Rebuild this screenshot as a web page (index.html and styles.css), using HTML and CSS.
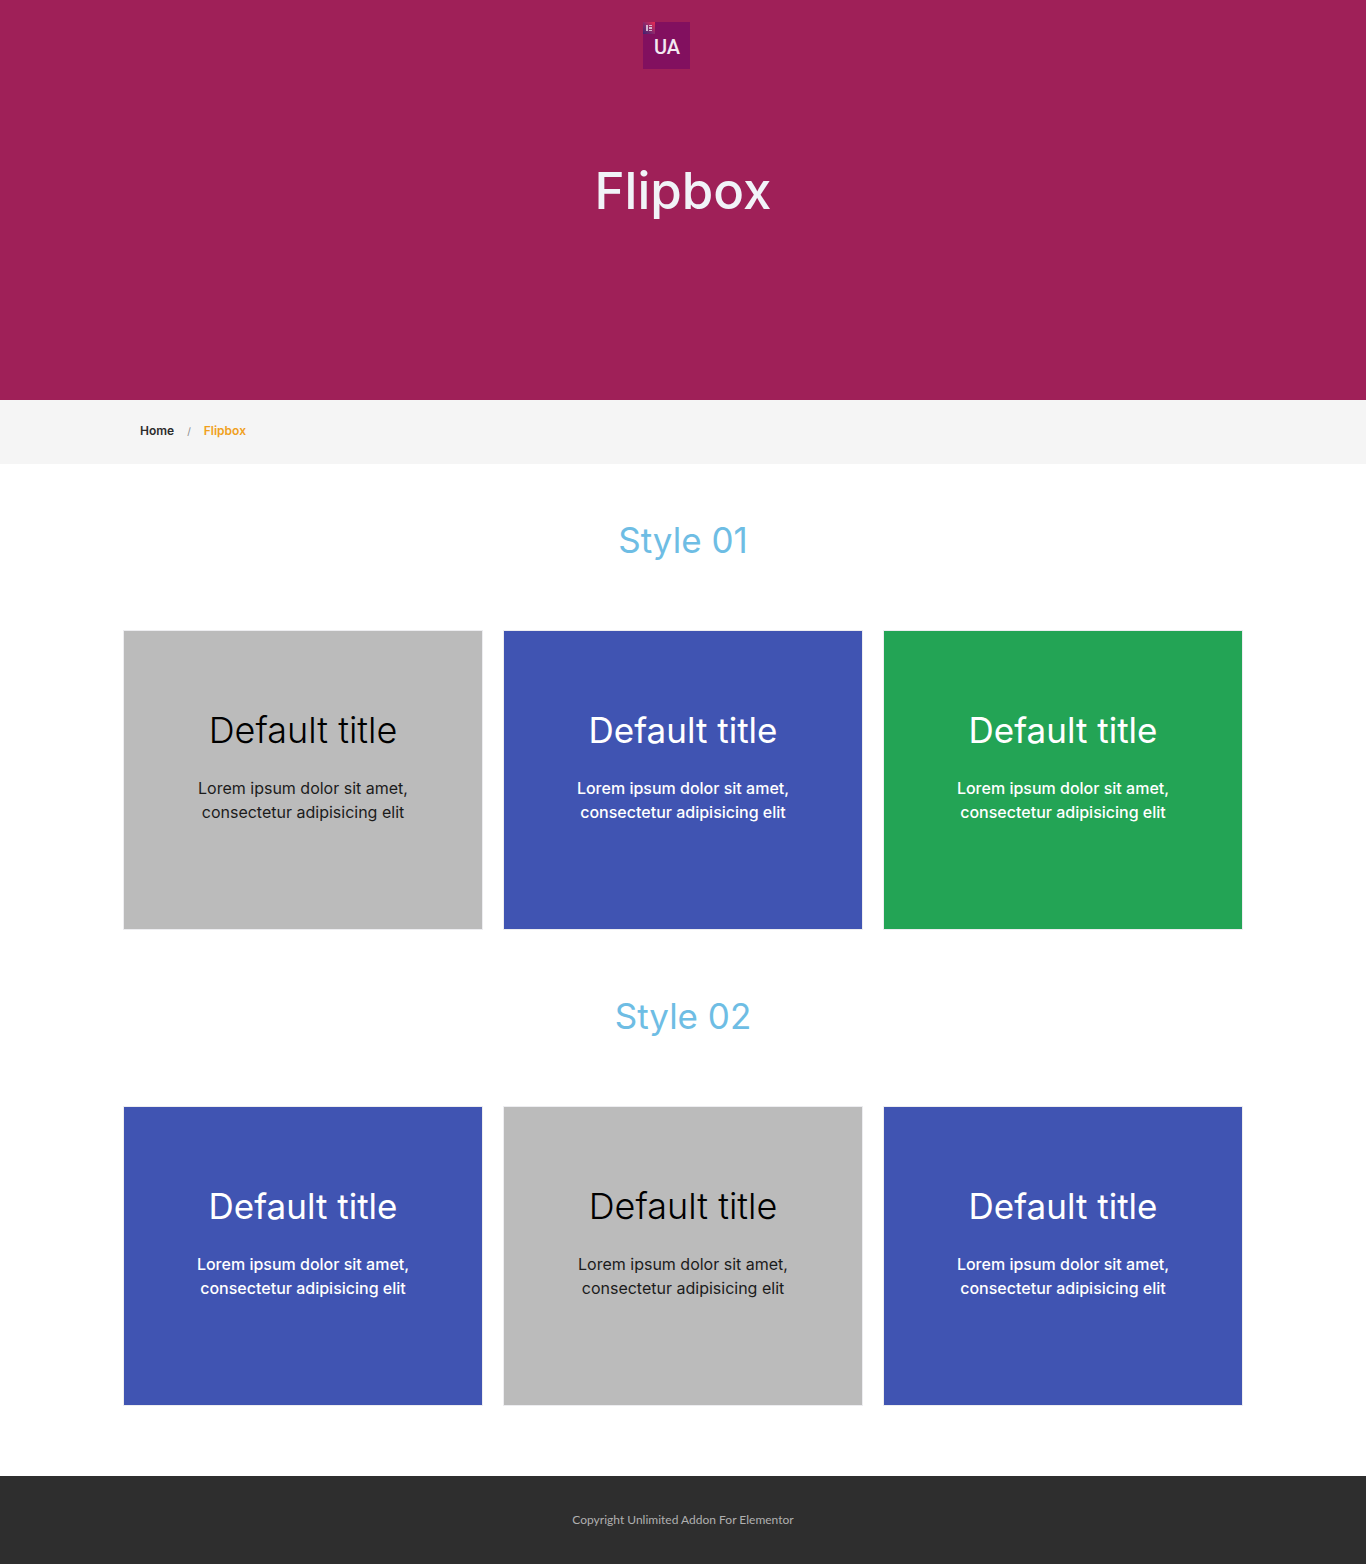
FILE: index.html
```html
<!DOCTYPE html>
<html lang="en">
<head>
<meta charset="utf-8">
<meta name="viewport" content="width=device-width, initial-scale=1">
<title>Flipbox</title>
<link rel="stylesheet" href="styles.css">
</head>
<body>
<header class="hero">
  <a class="logo" href="#" aria-label="Unlimited Addon home">
    <svg width="47" height="47" viewBox="0 0 47 47" aria-hidden="true">
      <defs>
        <linearGradient id="badge" x1="0" y1="1" x2="1" y2="0">
          <stop offset="0" stop-color="#3b2270"/>
          <stop offset="0.5" stop-color="#8d2a6c"/>
          <stop offset="1" stop-color="#ee2a50"/>
        </linearGradient>
      </defs>
      <rect width="47" height="47" fill="#82105f"/>
      <rect width="12" height="12" fill="url(#badge)"/>
      <path d="M3 3h2v6H3zM6 3h3v1H6zM6 5h3v2H6zM6 8h3v1H6z" fill="#e4cfe0" opacity="0.85"/>
      <text class="logo-text" x="24" y="32" text-anchor="middle">UA</text>
    </svg>
  </a>
  <h1 class="hero-title">Flipbox</h1>
</header>
<nav class="breadcrumb" aria-label="Breadcrumb">
  <ol class="crumbs">
    <li><a href="#">Home</a></li>
    <li class="separator" aria-hidden="true">/</li>
    <li class="current" aria-current="page">Flipbox</li>
  </ol>
</nav>
<main class="content">
  <section>
    <h2 class="section-title">Style 01</h2>
    <div class="cards">
      <article class="card gray"><h3>Default title</h3><p>Lorem ipsum dolor sit amet, consectetur adipisicing elit</p></article>
      <article class="card blue"><h3>Default title</h3><p>Lorem ipsum dolor sit amet, consectetur adipisicing elit</p></article>
      <article class="card green"><h3>Default title</h3><p>Lorem ipsum dolor sit amet, consectetur adipisicing elit</p></article>
    </div>
  </section>
  <section>
    <h2 class="section-title">Style 02</h2>
    <div class="cards">
      <article class="card blue"><h3>Default title</h3><p>Lorem ipsum dolor sit amet, consectetur adipisicing elit</p></article>
      <article class="card gray"><h3>Default title</h3><p>Lorem ipsum dolor sit amet, consectetur adipisicing elit</p></article>
      <article class="card blue"><h3>Default title</h3><p>Lorem ipsum dolor sit amet, consectetur adipisicing elit</p></article>
    </div>
  </section>
</main>
<footer class="footer">Copyright Unlimited Addon For Elementor</footer>
</body>
</html>
```
FILE: styles.css
```css
* { box-sizing: border-box; }
body {
  margin: 0;
  background: #fff;
  font-family: Inter, "Open Sans", sans-serif;
  font-size: 16px;
  line-height: 24px;
}
h1, h2, h3, p, ol { margin: 0; padding: 0; }
a { color: inherit; text-decoration: none; }

.hero {
  display: flex;
  flex-direction: column;
  align-items: center;
  min-height: 400px;
  padding-top: 22px;
  background: #9f2058;
  color: #f1f3f8;
}
.logo { display: block; margin-right: 33px; }
.logo svg { display: block; }
.logo-text { font: 500 20px Roboto, sans-serif; fill: #f3e9f1; }
.hero-title {
  margin-top: 92px;
  font-size: 51px;
  font-weight: 500;
  line-height: 60px;
}

.breadcrumb { background: #f5f5f5; padding: 19px 20px 21px; }
.crumbs {
  display: flex;
  gap: 13px;
  max-width: 1086px;
  margin: 0 auto;
  list-style: none;
  color: #2c2c2c;
  font-size: 12px;
  font-weight: 600;
}
.separator { color: #888; font-size: 10px; font-weight: 400; }
.current { color: #f0a01c; }

.content {
  display: grid;
  gap: 66px;
  max-width: 1160px;
  margin: 0 auto;
  padding: 56px 20px 70px;
}
.section-title {
  margin-bottom: 70px;
  color: #6ebde4;
  font-size: 35px;
  font-weight: 400;
  line-height: 40px;
  text-align: center;
}
.cards {
  display: grid;
  grid-template-columns: repeat(auto-fit, minmax(280px, 1fr));
  gap: 20px;
}
.card {
  min-height: 300px;
  padding: 77px 50px;
  border: 1px solid #ededf0;
  color: #fff;
  text-align: center;
}
.card h3 {
  margin-bottom: 24px;
  font-size: 35px;
  font-weight: 400;
  line-height: 44px;
}
.card p { font-weight: 500; }
.gray { background: #bbb; color: #000; }
.card.gray h3 { font-size: 36px; font-weight: 300; }
.card.gray p { color: #1b1b1b; font-weight: 400; }
.blue { background: #4054b2; }
.green { background: #23a455; }

.footer {
  padding: 32px 20px;
  background: #2e2e2e;
  color: #b0b0b0;
  font-family: Lato, sans-serif;
  font-size: 12px;
  text-align: center;
}
```
